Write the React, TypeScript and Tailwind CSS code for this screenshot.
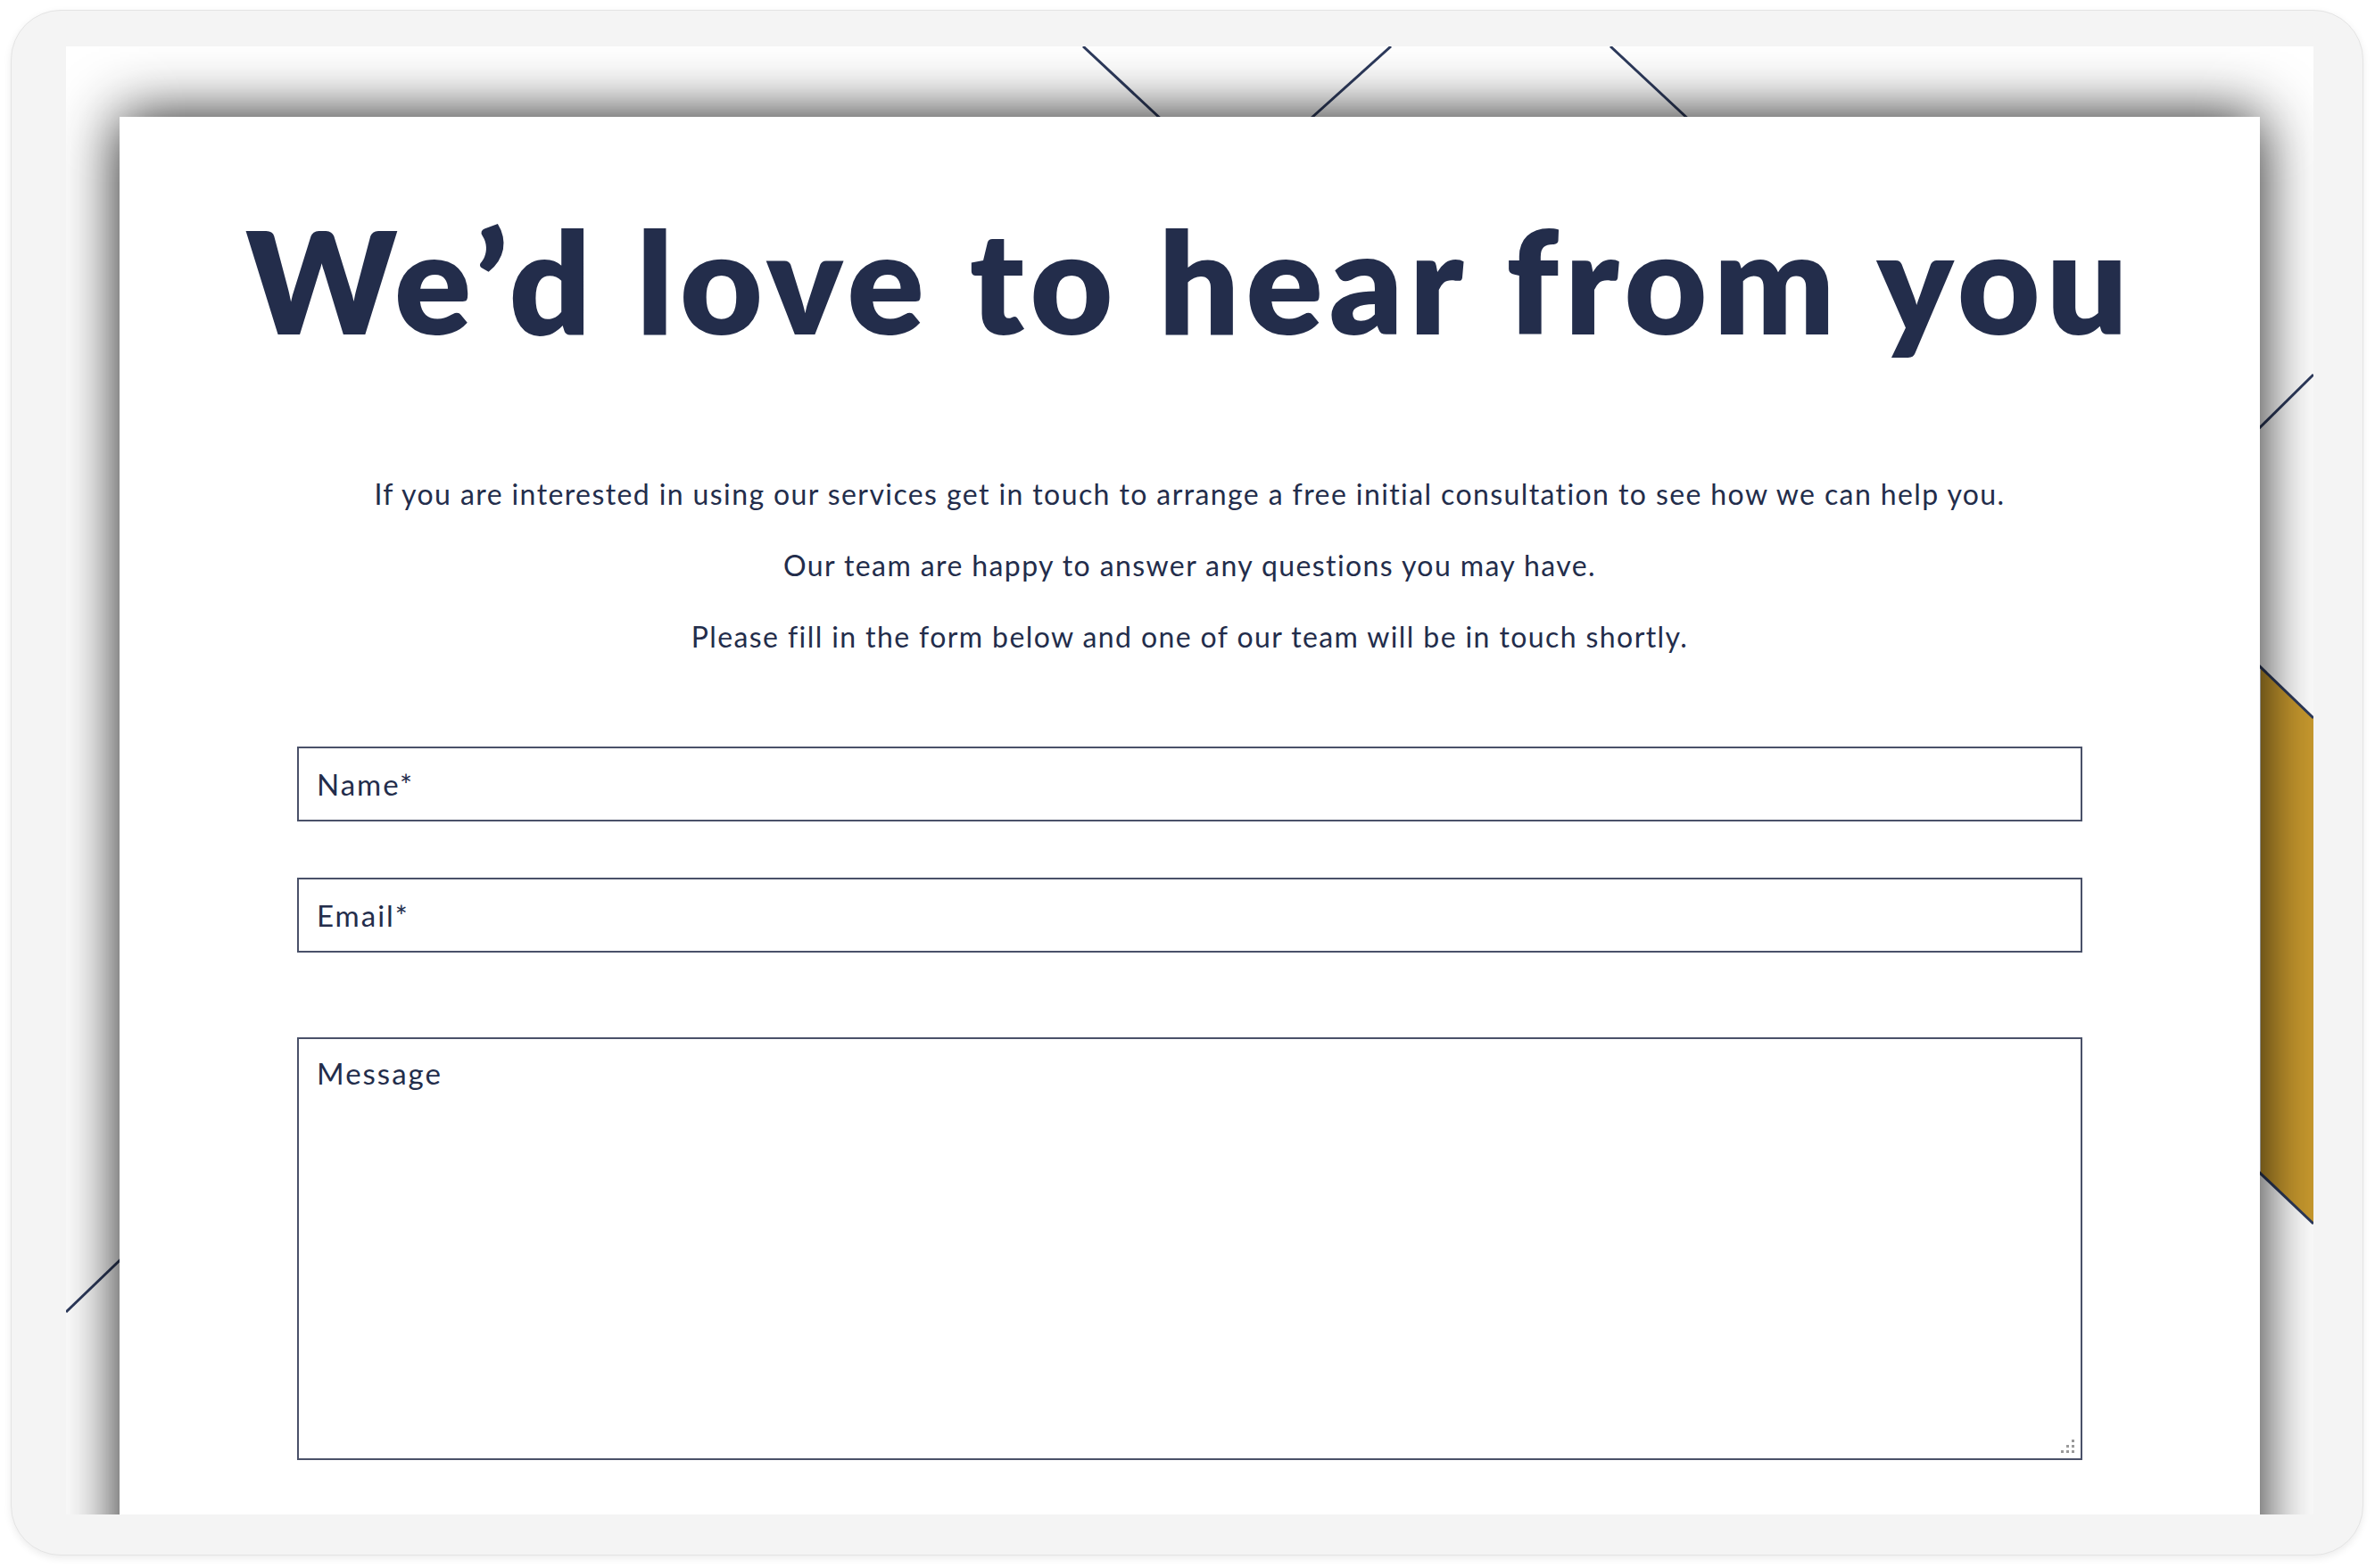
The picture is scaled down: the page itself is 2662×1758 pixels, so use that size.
import React from 'react'

const navy = '#232d4b'

// Background art behind the card: thin navy diagonals and the gold band on the right
const BackgroundLines = () => (
  <svg
    className="absolute inset-0"
    width={2519}
    height={1646}
    viewBox="0 0 2519 1646"
    fill="none"
  >
    <polygon points="2460,696 2519,753 2519,1320 2460,1264" fill="#c99a2e" />
    <g stroke="#2d3a5c" strokeWidth={3}>
      <line x1={1140} y1={0} x2={1260} y2={112} />
      <line x1={1485} y1={0} x2={1365} y2={108} />
      <line x1={1731} y1={0} x2={1851} y2={112} />
      <line x1={2440} y1={446} x2={2519} y2={368} />
      <line x1={2440} y1={677} x2={2519} y2={753} />
      <line x1={2440} y1={1245} x2={2519} y2={1320} />
      <line x1={0} y1={1419} x2={80} y2={1342} />
    </g>
  </svg>
)

const ResizeDots = () => (
  <svg
    className="absolute right-[8px] bottom-[8px] pointer-events-none"
    width={16}
    height={16}
    viewBox="0 0 16 16"
  >
    <g fill="#9a9a9a">
      <rect x={12} y={1} width={3} height={3} />
      <rect x={6} y={7} width={3} height={3} />
      <rect x={12} y={7} width={3} height={3} />
      <rect x={0} y={13} width={3} height={3} />
      <rect x={6} y={13} width={3} height={3} />
      <rect x={12} y={13} width={3} height={3} />
    </g>
  </svg>
)

const fieldClass =
  'block w-full border-2 border-[#4a5169] bg-white text-[33px] tracking-[2px] text-[#232d4b] placeholder:text-[#232d4b] outline-none'

export default function App() {
  return (
    <div
      className="w-[2662px] h-[1758px] bg-white pt-[11px] pl-[12px]"
      style={{ fontFamily: 'Lato, "Noto Sans", sans-serif' }}
    >
      <div className="w-[2637px] h-[1733px] rounded-[56px] bg-[#f4f4f4] border border-[#e4e4e4] shadow-[0_3px_8px_rgba(0,0,0,0.08)] pt-[40px] pl-[61px]">
        <div className="relative w-[2519px] h-[1646px] overflow-hidden bg-white">
          <BackgroundLines />

          {/* Contact card */}
          <div className="relative ml-[60px] mt-[79px] w-[2399px] h-[1700px] bg-white shadow-[0_0_64px_0_rgba(0,0,0,0.9)] pt-[102px] px-[199px]">
            <h1
              className="-mx-[199px] text-center font-extrabold text-[160px] leading-none tracking-[7px] whitespace-nowrap"
              style={{ color: navy }}
            >
              We’d love to hear from you
            </h1>

            <div
              className="mt-[141px] flex flex-col gap-[40px] text-center text-[32px] leading-[40px] tracking-[1.4px] whitespace-nowrap"
              style={{ color: navy }}
            >
              <p>
                If you are interested in using our services get in touch to arrange a free initial consultation to see how we can help you.
              </p>
              <p>Our team are happy to answer any questions you may have.</p>
              <p>Please fill in the form below and one of our team will be in touch shortly.</p>
            </div>

            <form className="mt-[103px]">
              <input
                type="text"
                placeholder="Name*"
                className={`${fieldClass} h-[84px] px-[20px]`}
              />
              <input
                type="email"
                placeholder="Email*"
                className={`${fieldClass} h-[84px] px-[20px] mt-[63px]`}
              />
              <div className="relative mt-[95px]">
                <textarea
                  placeholder="Message"
                  className={`${fieldClass} h-[474px] px-[20px] pt-[18px] leading-[40px] resize-none`}
                />
                <ResizeDots />
              </div>
            </form>
          </div>
        </div>
      </div>
    </div>
  )
}
